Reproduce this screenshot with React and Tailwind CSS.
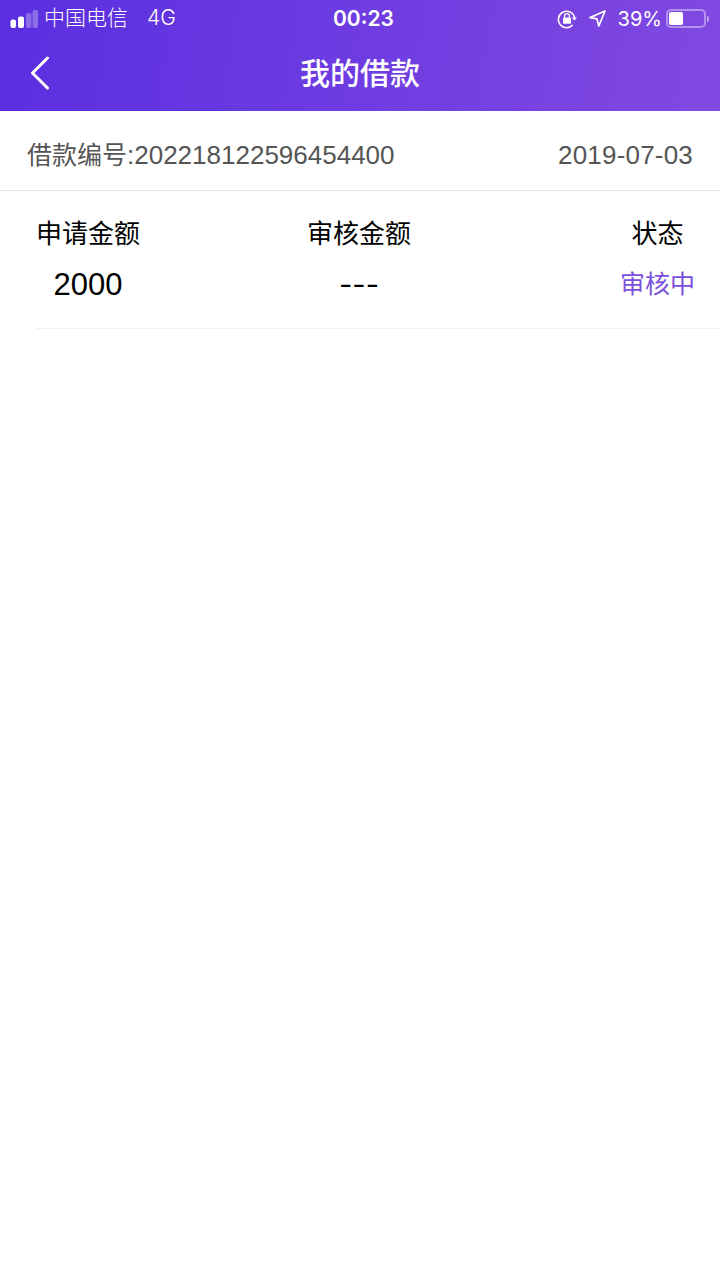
const font = { fontFamily: "Inter, 'Noto Sans CJK SC', sans-serif" };

function Signal() {
  return (
    <svg width="28" height="18" viewBox="0 0 28 18" className="shrink-0">
      <rect x="0.5" y="9.5" width="5.5" height="8.5" rx="2" fill="#fff" />
      <rect x="8" y="6.5" width="6" height="11.5" rx="2" fill="#fff" />
      <rect x="16" y="3" width="5.5" height="15" rx="2" fill="#fff" fillOpacity=".3" />
      <rect x="22.5" y="0" width="5.5" height="18" rx="2" fill="#fff" fillOpacity=".3" />
    </svg>
  );
}

function LockRotate() {
  return (
    <svg width="20" height="20" viewBox="0 0 20 20" fill="none" className="shrink-0">
      <path d="M17.6 8.6A8.2 8.2 0 1 0 15.7 16" stroke="#fff" strokeWidth="1.6" />
      <path d="M14.8 8.4h5.2l-2.6 3.2z" fill="#fff" />
      <rect x="6" y="8.6" width="8" height="6.2" rx="1" fill="#fff" />
      <path d="M7.6 8.6V7a2.4 2.4 0 0 1 4.8 0v1.6" stroke="#fff" strokeWidth="1.4" />
    </svg>
  );
}

function Location() {
  return (
    <svg width="17" height="17" viewBox="0 0 17 17" fill="none" className="shrink-0">
      <path d="M16 1 1 7.6l6.9 1.3L9.8 16z" stroke="#fff" strokeWidth="1.7" strokeLinejoin="round" />
    </svg>
  );
}

function Battery() {
  return (
    <div className="flex items-center shrink-0">
      <div className="w-[40px] h-[19px] rounded-[5px] border-2 border-white/40 p-[1px]">
        <div className="w-[14px] h-full bg-white rounded-[2px]" />
      </div>
      <div className="w-[2px] h-[6px] bg-white/50 rounded-r-sm ml-[1px]" />
    </div>
  );
}

export default function App() {
  return (
    <div style={font} className="w-[720px] h-[1280px] bg-white overflow-hidden">
      <header className="h-[111px] bg-[linear-gradient(100deg,#5a2fe0,#8249e2)] text-white">
        <div className="h-[37px] flex items-center justify-between pl-[10px] pr-[11px] relative">
          <div className="flex items-center">
            <Signal />
            <span className="ml-[6px] pb-[2px] text-[21px] leading-none font-light">中国电信</span>
            <span className="ml-[19px] pb-[2px] text-[21px] leading-none font-light">4G</span>
          </div>
          <span className="absolute left-[333px] text-[21px] font-semibold leading-none">00:23</span>
          <div className="flex items-center">
            <LockRotate />
            <div className="ml-[12px]"><Location /></div>
            <span className="ml-[12px] text-[20px] leading-none">39%</span>
            <div className="ml-[4px]"><Battery /></div>
          </div>
        </div>
        <div className="h-[74px] relative flex items-center justify-center pb-[2px]">
          <svg width="20" height="34" viewBox="0 0 20 34" fill="none" className="absolute left-[30px] top-[19px]">
            <path d="M17.5 2 2.5 17l15 15" stroke="#fff" strokeWidth="3" strokeLinecap="round" strokeLinejoin="round" />
          </svg>
          <h1 className="text-[30px] font-medium leading-none">我的借款</h1>
        </div>
      </header>

      <div className="h-[80px] flex items-center justify-between pt-[9px] px-[27px] border-b border-[#e8e8ea] text-[#555555] text-[26px] font-['Liberation_Sans','Noto_Sans_CJK_SC',sans-serif]">
        <span><span className="text-[25px]">借款编号</span>:202218122596454400</span>
        <span className="tracking-[0.2px]">2019-07-03</span>
      </div>

      <div className="ml-[36px] h-[138px] border-b border-[#f1f1f3]">
        <div className="flex pt-[24px]">
          <div className="w-[104px] text-center">
            <div className="text-[26px] leading-[38px] text-black">申请金额</div>
            <div className="mt-[13px] text-[31px] leading-[38px] text-black font-['Liberation_Sans',sans-serif]">2000</div>
          </div>
          <div className="w-[104px] ml-[167px] text-center">
            <div className="text-[26px] leading-[38px] text-black">审核金额</div>
            <div className="mt-[13px] text-[29px] leading-[38px] text-black">---</div>
          </div>
          <div className="w-[75px] ml-[209px] text-center">
            <div className="text-[26px] leading-[38px] text-black">状态</div>
            <div className="mt-[12px] text-[25px] leading-[38px] text-[#7a50dc]">审核中</div>
          </div>
        </div>
      </div>
    </div>
  );
}
